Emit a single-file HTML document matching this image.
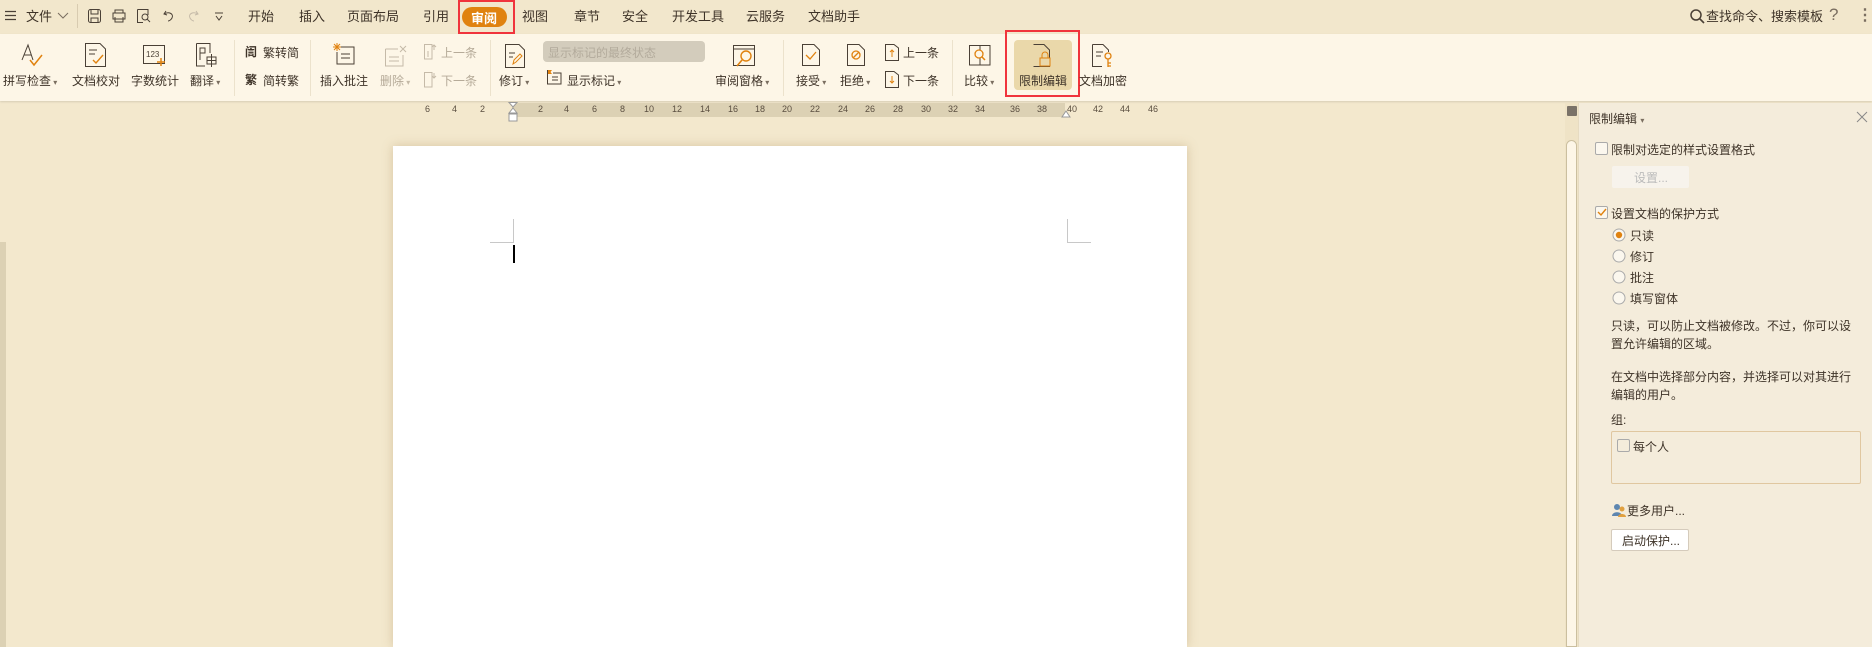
<!DOCTYPE html>
<html><head><meta charset="utf-8"><style>
*{margin:0;padding:0;box-sizing:border-box}
body{width:1872px;height:647px;overflow:hidden;background:#f3e8cd;font-family:"Liberation Sans","Noto Sans CJK SC",sans-serif;color:#3e3328;position:relative;font-size:12px}
.a{position:absolute;white-space:nowrap}
#tab{position:absolute;left:0;top:0;width:1872px;height:34px;background:#f2e7cc}
#rib{position:absolute;left:0;top:34px;width:1872px;height:67px;background:#fdf6e7;box-shadow:0 1px 2px rgba(0,0,0,.12)}
.t{font-size:13px;top:6px;color:#3e3328}
.l{font-size:12px;color:#3e3328}
.g{color:#b5aa98}
.sep{position:absolute;top:40px;width:1px;height:56px;background:#ece2cc}
svg{position:absolute;overflow:visible}
.dd{font-size:8px;color:#7a6e60}
</style></head><body>
<div id="tab"></div>
<div id="rib"></div>
<!-- tab bar -->
<svg style="left:5px;top:10px" width="12" height="12"><path d="M0 1.5H11M0 5.5H11M0 9.5H11" stroke="#4a4036" stroke-width="1.2"/></svg>
<div class="a t" style="left:26px">文件</div>
<svg style="left:58px;top:13px" width="10" height="6"><path d="M0 0L5 5L10 0" stroke="#7a6e60" fill="none"/></svg>
<div class="a" style="left:77px;top:4px;width:1px;height:24px;background:#d8cbb0"></div>
<svg style="left:88px;top:9px" width="13" height="14"><rect x=".5" y=".5" width="12" height="13" rx="2" fill="none" stroke="#4a4036"/><path d="M3 1V5H10V1M3 13V9H10V13" fill="none" stroke="#4a4036"/></svg>
<svg style="left:112px;top:9px" width="14" height="14"><path d="M3 4V1H11V4M1 4H13V10H1ZM3 8V13H11V8" fill="none" stroke="#4a4036"/></svg>
<svg style="left:137px;top:9px" width="14" height="14"><path d="M.5 .5H11V6M.5 .5V13.5H6" fill="none" stroke="#4a4036"/><circle cx="8" cy="8" r="3" fill="none" stroke="#4a4036"/><path d="M10 10L13 13" stroke="#4a4036"/></svg>
<svg style="left:163px;top:10px" width="11" height="12"><path d="M3 1L1 4L4 5M1 4C6 1 11 4 9 8C8 10 6 11 5 11" fill="none" stroke="#4a4036"/></svg>
<svg style="left:188px;top:10px" width="11" height="12"><path d="M8 1L10 4L7 5M10 4C5 1 0 4 2 8C3 10 5 11 6 11" fill="none" stroke="#c5baa8"/></svg>
<svg style="left:215px;top:13px" width="8" height="8"><path d="M0 0H8M1 3L4 7L7 3" fill="none" stroke="#4a4036"/></svg>
<div class="a t" style="left:248px">开始</div>
<div class="a t" style="left:299px">插入</div>
<div class="a t" style="left:347px">页面布局</div>
<div class="a t" style="left:423px">引用</div>
<div class="a" style="left:462px;top:7px;width:45px;height:20px;border-radius:10px;background:#e0820f"></div>
<div class="a t" style="left:471px;top:8px;color:#fff;font-weight:bold">审阅</div>
<div class="a" style="left:458px;top:0;width:57px;height:34px;border:2px solid #f0343c"></div>
<div class="a t" style="left:522px">视图</div>
<div class="a t" style="left:574px">章节</div>
<div class="a t" style="left:622px">安全</div>
<div class="a t" style="left:672px">开发工具</div>
<div class="a t" style="left:746px">云服务</div>
<div class="a t" style="left:808px">文档助手</div>
<svg style="left:1690px;top:9px" width="15" height="15"><circle cx="6" cy="6" r="5" fill="none" stroke="#4a4036" stroke-width="1.5"/><path d="M10 10L14 14" stroke="#4a4036" stroke-width="1.6"/></svg>
<div class="a t" style="left:1706px">查找命令、搜索模板</div>
<div class="a" style="left:1829px;top:5px;font-size:17px;color:#7a6e60">?</div>
<div class="a" style="left:1857px;top:5px;font-size:16px;color:#7a6e60;font-weight:bold">⋮</div>

<!-- ribbon icons -->
<svg style="left:20px;top:43px" width="24" height="24"><path d="M2 17L8 2L13 17M4 12H11" fill="none" stroke="#4a4036"/><path d="M10 17L14 22L22 12" fill="none" stroke="#e0820f" stroke-width="1.5"/></svg>
<svg style="left:85px;top:43px" width="22" height="26"><path d="M.5 .5H15L20.5 6V23.5H.5Z" fill="none" stroke="#4a4036"/><path d="M4 7H12M4 11H10" stroke="#4a4036"/><path d="M8 17L11 20L18 12" fill="none" stroke="#e0820f" stroke-width="1.4"/></svg>
<svg style="left:143px;top:45px" width="24" height="22"><rect x=".5" y=".5" width="21" height="18" fill="none" stroke="#4a4036"/><text x="3" y="12" font-size="8" fill="#4a4036" font-family="Liberation Sans">123</text><path d="M18 13V21M14 17H22" stroke="#e0820f" stroke-width="1.5"/></svg>
<svg style="left:196px;top:43px" width="22" height="24"><path d="M.5 .5H14V10M.5 .5V23H9" fill="none" stroke="#4a4036"/><path d="M4 17V5H9V10H4" fill="none" stroke="#4a4036"/><rect x="11" y="14" width="9" height="7" fill="none" stroke="#4a4036"/><path d="M15.5 11V24M11 17.5H20" stroke="#4a4036"/></svg>
<div class="a l" style="left:3px;top:72px">拼写检查<span class="dd"> ▾</span></div>
<div class="a l" style="left:72px;top:72px">文档校对</div>
<div class="a l" style="left:131px;top:72px">字数统计</div>
<div class="a l" style="left:190px;top:72px">翻译<span class="dd"> ▾</span></div>
<div class="sep" style="left:234px"></div>
<div class="a l" style="left:245px;top:43px;font-weight:bold">訚</div>
<div class="a l" style="left:263px;top:44px">繁转简</div>
<div class="a l" style="left:245px;top:71px;font-weight:bold">繁</div>
<div class="a l" style="left:263px;top:72px">简转繁</div>
<div class="sep" style="left:310px"></div>
<svg style="left:333px;top:43px" width="24" height="24"><path d="M6 4H21V21H4V9" fill="none" stroke="#4a4036"/><path d="M8 11H17M8 15H17" stroke="#4a4036"/><path d="M4 0V8M0 4H8M1 1L7 7M7 1L1 7" stroke="#e0820f"/></svg>
<div class="a l" style="left:320px;top:72px">插入批注</div>
<svg style="left:385px;top:45px" width="22" height="22"><path d="M.5 4H13M.5 4V21H18V10" fill="none" stroke="#c5baa8"/><path d="M4 12H14M4 16H14M15 1L21 7M21 1L15 7" stroke="#c5baa8"/></svg>
<div class="a l g" style="left:380px;top:72px">删除<span class="dd" style="color:#c5baa8"> ▾</span></div>
<svg style="left:424px;top:44px" width="14" height="16"><path d="M.5 .5H8V15H.5ZM4 13V7" fill="none" stroke="#c5baa8"/><path d="M10 6V1M8 3L10 1L12 3" fill="none" stroke="#c5baa8"/></svg>
<div class="a l g" style="left:441px;top:44px">上一条</div>
<svg style="left:424px;top:72px" width="14" height="16"><path d="M.5 .5H8V15H.5Z" fill="none" stroke="#c5baa8"/><path d="M10 1V6M8 4L10 6L12 4" fill="none" stroke="#c5baa8"/></svg>
<div class="a l g" style="left:441px;top:72px">下一条</div>
<div class="sep" style="left:490px"></div>
<svg style="left:505px;top:44px" width="20" height="24"><path d="M.5 .5H14L19.5 6V23.5H.5Z" fill="none" stroke="#4a4036"/><path d="M4 9H10M4 13H8" stroke="#4a4036"/><path d="M8 20L9 16L15 10L17 12L11 18Z" fill="none" stroke="#e0820f"/></svg>
<div class="a l" style="left:499px;top:72px">修订<span class="dd"> ▾</span></div>
<div class="a" style="left:543px;top:41px;width:162px;height:21px;border-radius:4px;background:#d3ccbc"></div>
<div class="a l" style="left:548px;top:44px;color:#b3ab9c">显示标记的最终状态</div>
<svg style="left:547px;top:69px" width="16" height="16"><path d="M.5 1V15H14V4H6" fill="none" stroke="#4a4036"/><path d="M1 1H5L3.5 3L5 5H1" fill="#e0820f"/><path d="M5 8H11M5 11H11" stroke="#4a4036"/></svg>
<div class="a l" style="left:567px;top:72px">显示标记<span class="dd"> ▾</span></div>
<svg style="left:733px;top:45px" width="24" height="24"><rect x=".5" y=".5" width="21" height="20" fill="none" stroke="#4a4036"/><path d="M1 4H21" stroke="#4a4036"/><circle cx="13" cy="11" r="5" fill="none" stroke="#e0820f" stroke-width="1.4"/><path d="M9 15L4 21" stroke="#e0820f" stroke-width="1.6"/></svg>
<div class="a l" style="left:715px;top:72px">审阅窗格<span class="dd"> ▾</span></div>
<div class="sep" style="left:783px"></div>
<svg style="left:802px;top:44px" width="18" height="24"><path d="M.5 .5H12L17.5 6V21.5H.5Z" fill="none" stroke="#4a4036"/><path d="M4 11L8 15L14 8" fill="none" stroke="#e0820f" stroke-width="1.3"/></svg>
<div class="a l" style="left:796px;top:72px">接受<span class="dd"> ▾</span></div>
<svg style="left:847px;top:44px" width="18" height="24"><path d="M.5 .5H12L17.5 6V21.5H.5Z" fill="none" stroke="#4a4036"/><circle cx="9" cy="11" r="4" fill="none" stroke="#e0820f" stroke-width="1.3"/><path d="M6 14L12 8" stroke="#e0820f" stroke-width="1.3"/></svg>
<div class="a l" style="left:840px;top:72px">拒绝<span class="dd"> ▾</span></div>
<svg style="left:885px;top:44px" width="14" height="17"><path d="M.5 .5H9L13.5 4V16.5H.5Z" fill="none" stroke="#4a4036"/><path d="M7 13V6M5 8L7 6L9 8" fill="none" stroke="#e0820f"/></svg>
<div class="a l" style="left:903px;top:44px">上一条</div>
<svg style="left:885px;top:71px" width="14" height="17"><path d="M.5 .5H9L13.5 4V16.5H.5Z" fill="none" stroke="#4a4036"/><path d="M7 5V12M5 10L7 12L9 10" fill="none" stroke="#e0820f"/></svg>
<div class="a l" style="left:903px;top:72px">下一条</div>
<div class="sep" style="left:952px"></div>
<svg style="left:969px;top:45px" width="22" height="22"><path d="M.5 .5H21V20H.5ZM11 .5V20" fill="none" stroke="#4a4036"/><circle cx="10" cy="9" r="4" fill="#fdf6e7" stroke="#e0820f" stroke-width="1.3"/><path d="M13 12L16 15" stroke="#e0820f" stroke-width="1.5"/></svg>
<div class="a l" style="left:964px;top:72px">比较<span class="dd"> ▾</span></div>
<div class="a" style="left:1014px;top:40px;width:58px;height:50px;border-radius:4px;background:#ead8aa"></div>
<svg style="left:1033px;top:44px" width="20" height="24"><path d="M.5 .5H11L16.5 6V22.5H.5" fill="none" stroke="#4a4036"/><rect x="7" y="14" width="10" height="8" fill="#ead8aa" stroke="#e0820f"/><path d="M9 14V11A3 3 0 0 1 15 11V14" fill="none" stroke="#e0820f"/></svg>
<div class="a l" style="left:1019px;top:72px">限制编辑</div>
<div class="a" style="left:1005px;top:30px;width:75px;height:67px;border:2px solid #f0343c"></div>
<svg style="left:1092px;top:44px" width="22" height="24"><path d="M.5 .5H11L16.5 6V8M.5 .5V22.5H10" fill="none" stroke="#4a4036"/><path d="M4 8H11M4 12H9" stroke="#4a4036"/><circle cx="16" cy="12" r="3" fill="none" stroke="#e0820f" stroke-width="1.3"/><path d="M16 15V23M16 19H19M16 22H19" stroke="#e0820f" stroke-width="1.3"/></svg>
<div class="a l" style="left:1079px;top:72px">文档加密</div>

<!-- ruler -->
<div class="a" style="left:512px;top:103px;width:553px;height:14px;background:#dcd1b4"></div>
<div class="a" style="left:0;top:0;font-size:9px;color:#5a4e40">
<span class="a" style="left:425px;top:104px">6</span><span class="a" style="left:452px;top:104px">4</span><span class="a" style="left:480px;top:104px">2</span>
<span class="a" style="left:538px;top:104px">2</span><span class="a" style="left:564px;top:104px">4</span><span class="a" style="left:592px;top:104px">6</span><span class="a" style="left:620px;top:104px">8</span><span class="a" style="left:644px;top:104px">10</span><span class="a" style="left:672px;top:104px">12</span><span class="a" style="left:700px;top:104px">14</span><span class="a" style="left:728px;top:104px">16</span><span class="a" style="left:755px;top:104px">18</span><span class="a" style="left:782px;top:104px">20</span><span class="a" style="left:810px;top:104px">22</span><span class="a" style="left:838px;top:104px">24</span><span class="a" style="left:865px;top:104px">26</span><span class="a" style="left:893px;top:104px">28</span><span class="a" style="left:921px;top:104px">30</span><span class="a" style="left:948px;top:104px">32</span><span class="a" style="left:975px;top:104px">34</span><span class="a" style="left:1010px;top:104px">36</span><span class="a" style="left:1037px;top:104px">38</span><span class="a" style="left:1067px;top:104px">40</span><span class="a" style="left:1093px;top:104px">42</span><span class="a" style="left:1120px;top:104px">44</span><span class="a" style="left:1148px;top:104px">46</span></div>
<svg style="left:508px;top:102px" width="10" height="22"><path d="M1 .5H9L5 5Z" fill="#fff" stroke="#999"/><path d="M5 6L9 11H1Z" fill="#fff" stroke="#999"/><rect x="1" y="12" width="8" height="7" fill="#fff" stroke="#999"/></svg>
<svg style="left:1061px;top:110px" width="10" height="8"><path d="M5 1L9 7H1Z" fill="#fff" stroke="#999"/></svg>
<div class="a" style="left:0;top:242px;width:6px;height:405px;background:#dcd1b4"></div>

<!-- page -->
<div class="a" style="left:393px;top:146px;width:794px;height:501px;background:#fff;box-shadow:0 0 10px rgba(160,130,80,.35)"></div>
<div class="a" style="left:513px;top:219px;width:1px;height:24px;background:#c8c8c8"></div>
<div class="a" style="left:490px;top:242px;width:24px;height:1px;background:#c8c8c8"></div>
<div class="a" style="left:1067px;top:219px;width:1px;height:24px;background:#c8c8c8"></div>
<div class="a" style="left:1067px;top:242px;width:24px;height:1px;background:#c8c8c8"></div>
<div class="a" style="left:513px;top:245px;width:2px;height:18px;background:#000"></div>

<!-- scrollbar -->
<div class="a" style="left:1565px;top:103px;width:13px;height:544px;background:#efe3c6"></div>
<div class="a" style="left:1567px;top:106px;width:10px;height:10px;background:#7a7268;border-radius:1px"></div>
<div class="a" style="left:1566px;top:140px;width:11px;height:507px;background:#fdf6e7;border:1px solid #cbbf9f;border-radius:6px 6px 0 0"></div>
<!-- panel -->
<div class="a" style="left:1578px;top:103px;width:294px;height:544px;background:#f4ecdb;border-left:1px solid #e6dbc2"></div>
<div class="a" style="left:1589px;top:110px;font-size:12px">限制编辑 <span class="dd">▾</span></div>
<svg style="left:1857px;top:112px" width="10" height="10"><path d="M0 0L10 10M10 0L0 10" stroke="#888"/></svg>
<div class="a" style="left:1595px;top:142px;width:13px;height:13px;border:1px solid #aaa;border-radius:2px;background:#fbf7ee"></div>
<div class="a l" style="left:1611px;top:141px">限制对选定的样式设置格式</div>
<div class="a" style="left:1612px;top:166px;width:77px;height:22px;background:#f7f3ec;border-radius:2px"></div>
<div class="a l g" style="left:1634px;top:169px;color:#bbb">设置...</div>
<div class="a" style="left:1595px;top:206px;width:13px;height:13px;border:1px solid #aaa;border-radius:2px;background:#fbf7ee"></div>
<svg style="left:1597px;top:208px" width="10" height="9"><path d="M1 4L4 7L9 1" fill="none" stroke="#e0820f" stroke-width="1.4"/></svg>
<div class="a l" style="left:1611px;top:205px">设置文档的保护方式</div>
<svg style="left:1612px;top:228px" width="14" height="74"><circle cx="7" cy="7" r="6" fill="#fbf7ee" stroke="#aaa"/><circle cx="7" cy="7" r="3.2" fill="#e0820f"/><circle cx="7" cy="28" r="6" fill="#fbf7ee" stroke="#aaa"/><circle cx="7" cy="49" r="6" fill="#fbf7ee" stroke="#aaa"/><circle cx="7" cy="70" r="6" fill="#fbf7ee" stroke="#aaa"/></svg>
<div class="a l" style="left:1630px;top:227px">只读</div>
<div class="a l" style="left:1630px;top:248px">修订</div>
<div class="a l" style="left:1630px;top:269px">批注</div>
<div class="a l" style="left:1630px;top:290px">填写窗体</div>
<div class="a l" style="left:1611px;top:317px;line-height:18px;white-space:normal;width:250px">只读，可以防止文档被修改。不过，你可以设置允许编辑的区域。</div>
<div class="a l" style="left:1611px;top:368px;line-height:18px;white-space:normal;width:250px">在文档中选择部分内容，并选择可以对其进行编辑的用户。</div>
<div class="a l" style="left:1611px;top:411px">组:</div>
<div class="a" style="left:1611px;top:431px;width:250px;height:53px;border:1px solid #e0c7a0;border-radius:2px"></div>
<div class="a" style="left:1617px;top:439px;width:13px;height:13px;border:1px solid #aaa;border-radius:2px"></div>
<div class="a l" style="left:1633px;top:438px">每个人</div>
<svg style="left:1612px;top:503px" width="14" height="14"><circle cx="5" cy="4" r="3" fill="#5d86b0"/><path d="M0 13C0 8 10 8 10 13Z" fill="#5d86b0"/><circle cx="10" cy="6" r="2.5" fill="#e0a040"/><path d="M6 14C6 10 14 10 14 14Z" fill="#e0a040"/></svg>
<div class="a l" style="left:1627px;top:502px">更多用户...</div>
<div class="a" style="left:1611px;top:529px;width:78px;height:22px;border:1px solid #d5cbbc;border-radius:2px;background:#fff"></div>
<div class="a l" style="left:1622px;top:532px">启动保护...</div>
</body></html>
